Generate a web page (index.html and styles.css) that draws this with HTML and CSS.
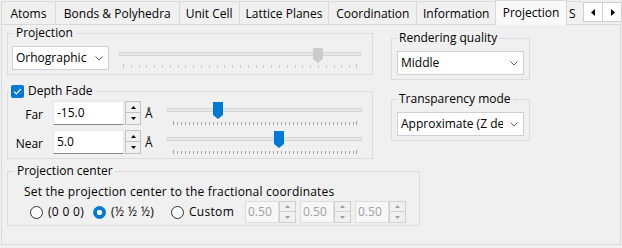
FILE: index.html
```html
<!DOCTYPE html>
<html lang="en">
<head>
  <meta charset="UTF-8">
  <title>Projection</title>
  <link rel="stylesheet" href="styles.css">
</head>
<body>
  <div class="tabbar">
    <div class="tabs">
      <div class="tab w-atoms">Atoms</div>
      <div class="tab w-bonds">Bonds &amp; Polyhedra</div>
      <div class="tab w-cell">Unit Cell</div>
      <div class="tab w-planes">Lattice Planes</div>
      <div class="tab w-coord">Coordination</div>
      <div class="tab w-info">Information</div>
      <div class="tab active w-proj">Projection</div>
      <div class="tab cut">S</div>
    </div>
    <div class="scroll-btns">
      <div class="arrow"><svg width="5" height="7" viewBox="0 0 5 7"><path d="M4 0v7L0 3.5z" fill="#000"/></svg></div>
      <div class="arrow"><svg width="5" height="7" viewBox="0 0 5 7"><path d="M1 0v7l4-3.5z" fill="#000"/></svg></div>
    </div>
  </div>

  <div class="pane">
    <div class="top-row">
      <div class="left-col">
        <fieldset class="group g-projection">
          <legend>Projection</legend>
          <div class="proj-row">
            <div class="combo c-proj">
              <span class="combo-text">Orhographic</span>
              <svg class="chevron" width="8" height="5" viewBox="0 0 8 5"><polyline points="0.5,0.5 4,4 7.5,0.5" fill="none" stroke="#606060"/></svg>
            </div>
            <div class="slider s-proj disabled">
              <div class="groove"></div>
              <div class="ticks"></div>
              <svg class="thumb" style="left:194px" width="10" height="15" viewBox="0 0 10 15"><path d="M0 0h10v11l-5 4-5-4z" fill="#cccccc"/></svg>
            </div>
          </div>
        </fieldset>

        <fieldset class="group g-depth">
          <legend><span class="checkbox"><svg width="9" height="7" viewBox="0 0 9 7"><polyline points="1,3.5 3.3,5.8 8,1" fill="none" stroke="#fff" stroke-width="1.2"/></svg></span>Depth Fade</legend>
          <div class="depth-row">
            <span class="field-label">Far</span>
            <div class="spinbox">
              <div class="spin-input">-15.0</div>
              <div class="spin-btns">
                <div class="spin-btn"><svg width="5" height="3" viewBox="0 0 5 3"><path d="M0 3h5L2.5 0z" fill="#000"/></svg></div>
                <div class="spin-btn"><svg width="5" height="3" viewBox="0 0 5 3"><path d="M0 0h5L2.5 3z" fill="#000"/></svg></div>
              </div>
            </div>
            <span class="unit">Å</span>
            <div class="slider s-depth">
              <div class="groove"></div>
              <div class="ticks"></div>
              <svg class="thumb" style="left:46px" width="10" height="17" viewBox="0 0 10 17"><path d="M0 0h10v13l-5 4-5-4z" fill="#0078d7"/></svg>
            </div>
          </div>
          <div class="depth-row">
            <span class="field-label">Near</span>
            <div class="spinbox">
              <div class="spin-input">5.0</div>
              <div class="spin-btns">
                <div class="spin-btn"><svg width="5" height="3" viewBox="0 0 5 3"><path d="M0 3h5L2.5 0z" fill="#000"/></svg></div>
                <div class="spin-btn"><svg width="5" height="3" viewBox="0 0 5 3"><path d="M0 0h5L2.5 3z" fill="#000"/></svg></div>
              </div>
            </div>
            <span class="unit">Å</span>
            <div class="slider s-depth">
              <div class="groove"></div>
              <div class="ticks"></div>
              <svg class="thumb" style="left:107px" width="10" height="17" viewBox="0 0 10 17"><path d="M0 0h10v13l-5 4-5-4z" fill="#0078d7"/></svg>
            </div>
          </div>
        </fieldset>
      </div>

      <div class="right-col">
        <fieldset class="group g-side">
          <legend>Rendering quality</legend>
          <div class="combo c-side">
            <span class="combo-text">Middle</span>
            <svg class="chevron" width="8" height="5" viewBox="0 0 8 5"><polyline points="0.5,0.5 4,4 7.5,0.5" fill="none" stroke="#606060"/></svg>
          </div>
        </fieldset>
        <fieldset class="group g-side g-transp">
          <legend>Transparency mode</legend>
          <div class="combo c-side">
            <span class="combo-text clip">Approximate (Z depth)</span>
            <svg class="chevron" width="8" height="5" viewBox="0 0 8 5"><polyline points="0.5,0.5 4,4 7.5,0.5" fill="none" stroke="#606060"/></svg>
          </div>
        </fieldset>
      </div>
    </div>

    <fieldset class="group g-center">
      <legend>Projection center</legend>
      <div class="center-body">
        <div class="center-text">Set the projection center to the fractional coordinates</div>
        <div class="radio-row">
          <label class="radio-item r-origin"><span class="radio"></span>(0 0 0)</label>
          <label class="radio-item r-half"><span class="radio checked"></span>(½ ½ ½)</label>
          <label class="radio-item r-custom"><span class="radio"></span>Custom</label>
          <div class="coords">
            <div class="spinbox small disabled">
              <div class="spin-input">0.50</div>
              <div class="spin-btns">
                <div class="spin-btn"><svg width="5" height="3" viewBox="0 0 5 3"><path d="M0 3h5L2.5 0z" fill="#a0a0a0"/></svg></div>
                <div class="spin-btn"><svg width="5" height="3" viewBox="0 0 5 3"><path d="M0 0h5L2.5 3z" fill="#a0a0a0"/></svg></div>
              </div>
            </div>
            <div class="spinbox small disabled">
              <div class="spin-input">0.50</div>
              <div class="spin-btns">
                <div class="spin-btn"><svg width="5" height="3" viewBox="0 0 5 3"><path d="M0 3h5L2.5 0z" fill="#a0a0a0"/></svg></div>
                <div class="spin-btn"><svg width="5" height="3" viewBox="0 0 5 3"><path d="M0 0h5L2.5 3z" fill="#a0a0a0"/></svg></div>
              </div>
            </div>
            <div class="spinbox small disabled">
              <div class="spin-input">0.50</div>
              <div class="spin-btns">
                <div class="spin-btn"><svg width="5" height="3" viewBox="0 0 5 3"><path d="M0 3h5L2.5 0z" fill="#a0a0a0"/></svg></div>
                <div class="spin-btn"><svg width="5" height="3" viewBox="0 0 5 3"><path d="M0 0h5L2.5 3z" fill="#a0a0a0"/></svg></div>
              </div>
            </div>
          </div>
        </div>
      </div>
    </fieldset>
  </div>
</body>
</html>
```

FILE: styles.css
```css
body {
  margin: 0;
  width: 622px;
  height: 248px;
  overflow: hidden;
  background: #f0f0f0;
  font-family: 'Open Sans', 'Noto Sans', sans-serif;
  font-size: 12px;
  line-height: 16px;
  color: #000;
}

/* tab strip */
.tabbar {
  display: flex;
  height: 25px;
  position: relative;
  z-index: 2;
}
.tabs {
  display: flex;
  align-items: flex-end;
  width: 581px;
  padding-left: 1px;
  overflow: hidden;
}
.tab {
  box-sizing: border-box;
  height: 23px;
  margin-left: -1px;
  margin-bottom: 1px;
  border: 1px solid #d9d9d9;
  border-bottom: none;
  padding-top: 2px;
  line-height: 20px;
  text-align: center;
  white-space: nowrap;
  background: #f0f0f0;
}
.tabs .tab:first-child { margin-left: 0; }
.tab.active {
  height: 25px;
  margin-bottom: 0;
  padding-top: 0;
  line-height: 24px;
  background: #f9f9f9;
  position: relative;
}
.tab.cut {
  width: 16px;
  border-right: none;
  text-align: left;
  padding-left: 2px;
  overflow: hidden;
}
.w-atoms { width: 55px; }
.w-bonds { width: 125px; }
.w-cell { width: 61px; }
.w-planes { width: 91px; }
.w-coord { width: 89px; }
.w-info { width: 80px; }
.w-proj { width: 72px; }

.scroll-btns {
  display: flex;
  margin-top: 2px;
  height: 20px;
}
.arrow {
  box-sizing: border-box;
  width: 20px;
  height: 20px;
  margin-left: -1px;
  border: 1px solid #cfcfcf;
  background: #fff;
  display: flex;
  align-items: center;
  justify-content: center;
}
.scroll-btns .arrow:first-child { margin-left: 1px; }

/* tab page */
.pane {
  box-sizing: border-box;
  margin: -1px 1px 0;
  height: 221px;
  border: 1px solid #d9d9d9;
  padding: 0 5px;
  background: #f0f0f0;
}
.top-row {
  display: flex;
  align-items: flex-start;
}
.left-col { width: 366px; }
.right-col {
  width: 139px;
  margin-left: 18px;
  padding-top: 5px;
}

/* group boxes */
.group {
  margin: 0;
  min-width: 0;
  border: 1px solid #dcdcdc;
  padding: 0;
}
.group legend {
  padding: 0 3px;
  line-height: 16px;
}
.g-projection { padding: 5px 4px 4px; }
.g-projection legend { margin-left: 1px; }
.proj-row {
  display: flex;
  align-items: flex-start;
}

.g-depth {
  margin-top: 8px;
  padding: 2px 0 4px;
}
.g-depth legend {
  display: flex;
  align-items: center;
  margin-left: 1px;
  padding: 0 4px 0 2px;
}
.checkbox {
  box-sizing: border-box;
  width: 13px;
  height: 13px;
  margin-right: 4px;
  border-radius: 2px;
  background: #0078d7;
  display: flex;
  align-items: center;
  justify-content: center;
}
.depth-row {
  display: flex;
  align-items: flex-start;
  height: 24px;
}
.depth-row + .depth-row { margin-top: 5px; }
.field-label {
  width: 35px;
  margin-right: 10px;
  text-align: right;
  line-height: 16px;
  padding-top: 6px;
}
.unit {
  margin-left: 4px;
  padding-top: 5px;
  width: 9px;
}

.g-side { padding: 5px 5px 4px; }
.g-side legend { padding: 0 2px; }
.g-transp { margin-top: 11px; }

.g-center {
  width: 413px;
  box-sizing: border-box;
  margin-top: 4px;
  padding: 5px 0 2px;
}
.g-center legend { margin-left: 6px; }
.center-body { padding-left: 16px; }
.center-text { letter-spacing: 0.2px; }
.radio-row {
  display: flex;
  align-items: center;
  margin-left: 6px;
  margin-top: 1px;
  height: 22px;
}
.radio-item {
  display: flex;
  align-items: center;
  letter-spacing: 0.3px;
}
.r-origin { width: 63px; }
.r-half { width: 78px; }
.r-custom { width: 74px; }
.radio {
  box-sizing: border-box;
  width: 13px;
  height: 13px;
  margin-right: 5px;
  border: 1px solid #333;
  border-radius: 50%;
  background: #fff;
}
.radio.checked {
  border-color: #0078d7;
  background: radial-gradient(circle, #fff 0 2.5px, #0078d7 3px);
}
.coords {
  display: flex;
  gap: 4px;
}

/* combo box */
.combo {
  box-sizing: border-box;
  height: 24px;
  border: 1px solid #d0d0d0;
  background: #fff;
  display: flex;
  align-items: center;
  padding: 0 5px 0 3px;
}
.combo-text {
  flex: 1;
  white-space: nowrap;
  overflow: hidden;
}
.combo-text.clip { margin-right: 3px; }
.chevron { flex: none; margin-left: 4px; }
.c-proj { width: 97px; }
.c-side { width: 127px; }

/* spin box */
.spinbox {
  display: flex;
  height: 24px;
}
.spin-input {
  box-sizing: border-box;
  width: 71px;
  height: 24px;
  border: 1px solid #e6e6e6;
  border-bottom-color: #8a8a8a;
  background: #fff;
  padding: 0 3px;
  line-height: 22px;
}
.spin-btns {
  display: flex;
  flex-direction: column;
  margin-left: 1px;
}
.spin-btn {
  box-sizing: border-box;
  width: 16px;
  height: 12px;
  border: 1px solid #c2c2c2;
  background: #f0f0f0;
  display: flex;
  align-items: center;
  justify-content: center;
}
.spin-btn + .spin-btn { margin-top: -1px; height: 13px; }
.spinbox.small { height: 22px; }
.spinbox.small .spin-input {
  width: 34px;
  height: 22px;
  line-height: 20px;
  padding: 0 2px;
}
.spinbox.small .spin-btns { margin-left: 0; }
.spinbox.small .spin-btn { height: 11px; width: 17px; }
.spinbox.small .spin-btn + .spin-btn { height: 12px; }
.spinbox.disabled .spin-input {
  color: #a0a0a0;
  background: #f7f7f7;
  border-color: #dedede;
}
.spinbox.disabled .spin-btn { border-color: #d0d0d0; }

/* sliders */
.slider {
  position: relative;
  height: 24px;
}
.groove {
  box-sizing: border-box;
  height: 4px;
  border: 1px solid #d6d6d6;
  background: #e7e7e7;
}
.ticks {
  box-sizing: border-box;
  height: 4px;
  border-left: 1px solid #a0a0a0;
  border-right: 1px solid #a0a0a0;
  background: repeating-linear-gradient(to right, transparent 0 3px, #a8a8a8 3px 4px) 0 1px / 100% 3px no-repeat;
}
.thumb { position: absolute; }

.s-proj {
  width: 242px;
  margin-left: 10px;
}
.s-proj .groove { margin-top: 6px; }
.s-proj .ticks {
  margin: 8px 4px 0;
  border-color: #c4c4c4;
  background: repeating-linear-gradient(to right, transparent 0 6.8px, #c8c8c8 6.8px 7.8px) 0 1px / 100% 3px no-repeat;
}
.s-proj .thumb { top: 2px; }

.s-depth {
  width: 195px;
  margin-left: 13px;
}
.s-depth .groove { margin-top: 7px; }
.s-depth .ticks { margin: 9px 5px 0 6px; }
.s-depth .thumb { top: 1px; }
```
